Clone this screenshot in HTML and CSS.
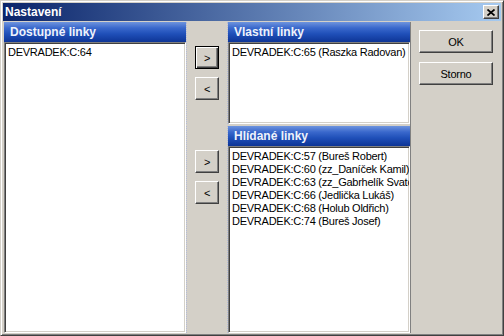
FILE: index.html
```html
<!DOCTYPE html>
<html>
    <head>
        <meta charset="utf-8" />
        <title>Nastavení</title>
        <link rel="stylesheet" href="styles.css">
    </head>

    <body>
        <div class="window">
            <div class="titlebar">
                <span class="title">Nastavení</span>
                <span class="close">
                    <svg width="8" height="7" viewBox="0 0 8 7">
                        <path d="M0.5 0.5 L7.5 6.5 M7.5 0.5 L0.5 6.5" stroke="#000" stroke-width="1.7" fill="none" />
                    </svg>
                </span>
            </div>
            <div class="client">
                <div class="panel avail">
                    <div class="head">Dostupné linky</div>
                    <div class="list">
                        <div class="item">DEVRADEK:C:64</div>
                    </div>
                </div>

                <div class="movers upper">
                    <button class="btn arrow default">&gt;</button>
                    <button class="btn arrow">&lt;</button>
                </div>

                <div class="panel own">
                    <div class="head">Vlastní linky</div>
                    <div class="list">
                        <div class="item">DEVRADEK:C:65 (Raszka Radovan)</div>
                    </div>
                </div>

                <div class="movers lower">
                    <button class="btn arrow">&gt;</button>
                    <button class="btn arrow">&lt;</button>
                </div>

                <div class="panel watched">
                    <div class="head">Hlídané linky</div>
                    <div class="list">
                        <div class="item">DEVRADEK:C:57 (Bureš Robert)</div>
                        <div class="item">DEVRADEK:C:60 (zz_Daníček Kamil)</div>
                        <div class="item">DEVRADEK:C:63 (zz_Gabrhelík Svatopluk)</div>
                        <div class="item">DEVRADEK:C:66 (Jedlička Lukáš)</div>
                        <div class="item">DEVRADEK:C:68 (Holub Oldřich)</div>
                        <div class="item">DEVRADEK:C:74 (Bureš Josef)</div>
                    </div>
                </div>

                <div class="side">
                    <button class="btn wide">OK</button>
                    <button class="btn wide">Storno</button>
                </div>
            </div>
        </div>
    </body>
</html>
```

FILE: styles.css
```css
body {
    margin: 0;
    background: #d4d0c8;
    font-family: "Liberation Sans", Arial, sans-serif;
}
.window {
    box-sizing: border-box;
    width: 504px;
    height: 336px;
    display: flex;
    flex-direction: column;
    background: #d4d0c8;
    border: 1px solid;
    border-color: #d4d0c8 #404040 #404040 #d4d0c8;
    box-shadow: inset 1px 1px #ffffff, inset -1px -1px #808080;
    padding: 2px;
}
.titlebar {
    height: 18px;
    flex: none;
    display: flex;
    align-items: center;
    justify-content: space-between;
    padding: 0 2px 0 2px;
    background: linear-gradient(to right, #0a246a, #a6caf0);
}
.title {
    color: #ffffff;
    font-weight: bold;
    font-size: 12px;
}
.close {
    box-sizing: border-box;
    width: 16px;
    height: 14px;
    display: flex;
    align-items: center;
    justify-content: center;
    background: #d4d0c8;
    border: 1px solid;
    border-color: #ffffff #404040 #404040 #ffffff;
    box-shadow: inset -1px -1px #808080;
}
.client {
    flex: 1;
    min-height: 0;
    display: grid;
    grid-template-columns: 182px 42px 182px 1fr;
    grid-template-rows: 102px 1fr;
    row-gap: 2px;
    padding: 1px 0 0 1px;
}
.panel {
    display: flex;
    flex-direction: column;
    min-height: 0;
}
.avail {
    grid-column: 1;
    grid-row: 1 / 3;
}
.own {
    grid-column: 3;
    grid-row: 1;
}
.watched {
    grid-column: 3;
    grid-row: 2;
}
.head {
    flex: none;
    height: 20px;
    line-height: 20px;
    padding-left: 6px;
    color: #eef2fb;
    font-weight: bold;
    font-size: 12px;
    background: linear-gradient(to bottom, #6e94de 0%, #3a68cc 30%, #1f4fb8 60%, #0e3596 100%);
}
.list {
    flex: 1;
    min-height: 0;
    overflow: hidden;
    background: #ffffff;
    border: 1px solid;
    border-color: #808080 #ffffff #ffffff #808080;
    box-shadow: inset 1px 1px #404040, inset -1px -1px #d4d0c8;
    padding: 3px 0 0 3px;
    font-size: 11px;
    line-height: 13px;
    letter-spacing: -0.25px;
    white-space: nowrap;
    color: #000000;
}
.movers {
    grid-column: 2;
    display: flex;
    flex-direction: column;
    align-items: center;
    gap: 8px;
    padding-top: 24px;
    border-left: 1px dotted #b4bcd8;
    border-right: 1px dotted #b4bcd8;
}
.upper {
    grid-row: 1;
}
.lower {
    grid-row: 2;
}
.side {
    grid-column: 4;
    grid-row: 1 / 3;
    display: flex;
    flex-direction: column;
    gap: 9px;
    padding: 8px 8px 0 8px;
    border-left: 1px solid #808080;
}
.btn {
    box-sizing: border-box;
    padding: 0;
    font-family: inherit;
    font-size: 11px;
    letter-spacing: -0.25px;
    color: #000000;
    background: #d4d0c8;
    border: 1px solid;
    border-color: #ffffff #404040 #404040 #ffffff;
    box-shadow: inset -1px -1px #808080;
}
.arrow {
    width: 24px;
    height: 23px;
}
.default {
    border-color: #000000;
    box-shadow: inset 1px 1px #ffffff, inset -1px -1px #404040, inset -2px -2px #808080;
}
.wide {
    width: 74px;
    height: 23px;
}
```
